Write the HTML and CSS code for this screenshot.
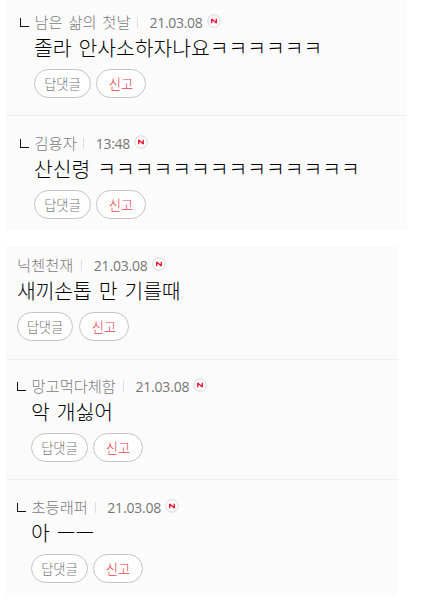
FILE: index.html
```html
<!DOCTYPE html>
<html lang="ko">
<head>
<meta charset="utf-8">
<title>댓글</title>
<link rel="stylesheet" href="styles.css">
</head>
<body>
<svg class="defs" width="0" height="0"><symbol id="new" viewBox="0 0 14 14"><circle cx="7" cy="7" r="6.2" fill="#fff" stroke="#d6d6d6"/><path d="M4.7 9.3V5L9.3 9V4.7" fill="none" stroke="#ee1c35" stroke-width="1.4" stroke-linejoin="bevel"/></symbol></svg>
<section class="thread wide">
  <article class="comment reply first">
    <header class="meta"><i class="branch"></i><span class="name">남은 삶의 첫날</span><i class="bar"></i><time>21.03.08</time><svg class="new"><use href="#new"/></svg></header>
    <p class="message">졸라 안사소하자나요ㅋㅋㅋㅋㅋㅋ</p>
    <div class="actions"><button class="answer">답댓글</button><button class="report">신고</button></div>
  </article>
  <article class="comment reply last">
    <header class="meta"><i class="branch"></i><span class="name">김용자</span><i class="bar"></i><time>13:48</time><svg class="new"><use href="#new"/></svg></header>
    <p class="message">산신령 ㅋㅋㅋㅋㅋㅋㅋㅋㅋㅋㅋㅋㅋㅋ</p>
    <div class="actions"><button class="answer">답댓글</button><button class="report">신고</button></div>
  </article>
</section>
<section class="thread narrow">
  <article class="comment root">
    <header class="meta"><span class="name">닉첸천재</span><i class="bar"></i><time>21.03.08</time><svg class="new"><use href="#new"/></svg></header>
    <p class="message">새끼손톱 만 기를때</p>
    <div class="actions"><button class="answer">답댓글</button><button class="report">신고</button></div>
  </article>
  <article class="comment reply middle">
    <header class="meta"><i class="branch"></i><span class="name">망고먹다체함</span><i class="bar"></i><time>21.03.08</time><svg class="new"><use href="#new"/></svg></header>
    <p class="message">악 개싫어</p>
    <div class="actions"><button class="answer">답댓글</button><button class="report">신고</button></div>
  </article>
  <article class="comment reply last">
    <header class="meta"><i class="branch"></i><span class="name">초등래퍼</span><i class="bar"></i><time>21.03.08</time><svg class="new"><use href="#new"/></svg></header>
    <p class="message">아 ㅡㅡ</p>
    <div class="actions"><button class="answer">답댓글</button><button class="report">신고</button></div>
  </article>
</section>
</body>
</html>
```

FILE: styles.css
```css
* { box-sizing: border-box; }
body {
  margin: 0;
  height: 600px;
  overflow: hidden;
  background: #fff;
  font-family: "Noto Sans CJK KR", sans-serif;
  font-weight: 300;
}
.defs { position: absolute; }
.thread { margin-left: 6px; background: #fbfbfb; }
.wide { width: 401px; height: 230px; }
.narrow { width: 392px; height: 350px; margin-top: 16px; }
.comment { height: 121px; padding: 17px 0 0 28px; border-bottom: 1px solid #eee; }
.narrow .reply { padding-left: 25px; }
.first { height: 116px; padding-top: 12px; }
.root { height: 114px; padding: 9px 0 0 11px; }
.middle { height: 120px; }
.narrow .middle { padding-top: 16px; }
.last { border-bottom: 0; }
.meta { display: flex; align-items: center; height: 20px; }
.branch {
  width: 9px;
  height: 9px;
  margin: 1px 5px 0 -14px;
  border: solid #111;
  border-width: 0 0 1px 1px;
}
.name {
  padding-left: .5px;
  margin-top: -2px;
  color: #7c7c7c;
  font-size: 15.3px;
  line-height: 20px;
  word-spacing: 1.5px;
  white-space: nowrap;
}
.root .name { padding-left: 0; }
.bar { width: 1px; height: 11px; margin: 0 11.5px 0 6.5px; background: #ddd; }
.narrow .bar { margin: 0 11px 0 7.5px; }
.root .bar { margin-right: 12px; }
time { margin-top: 1px; color: #777; font: 400 14px/20px "Open Sans", sans-serif; letter-spacing: -.3px; }
.narrow time { letter-spacing: -.2px; }
.new { width: 14px; height: 14px; margin: -2px 0 0 4px; }
.message {
  height: 26px;
  margin: 2px 0 0;
  color: #000;
  font-size: 20.4px;
  line-height: 26px;
  word-spacing: 1.2px;
  white-space: nowrap;
}
.root .message { word-spacing: 1.5px; letter-spacing: -.1px; }
.actions { display: flex; gap: 5px; margin-top: 9px; }
.actions button {
  width: 50px;
  height: 29px;
  padding: 0;
  border: 1px solid #c4c4c4;
  border-radius: 15px;
  background: #fff;
  color: #e53f4b;
  font: 300 13.3px/26px "Noto Sans CJK KR", sans-serif;
}
.actions .answer { width: 57px; color: #777; }
.root .actions { gap: 6px; }
.root .actions .answer { width: 56px; }
```
